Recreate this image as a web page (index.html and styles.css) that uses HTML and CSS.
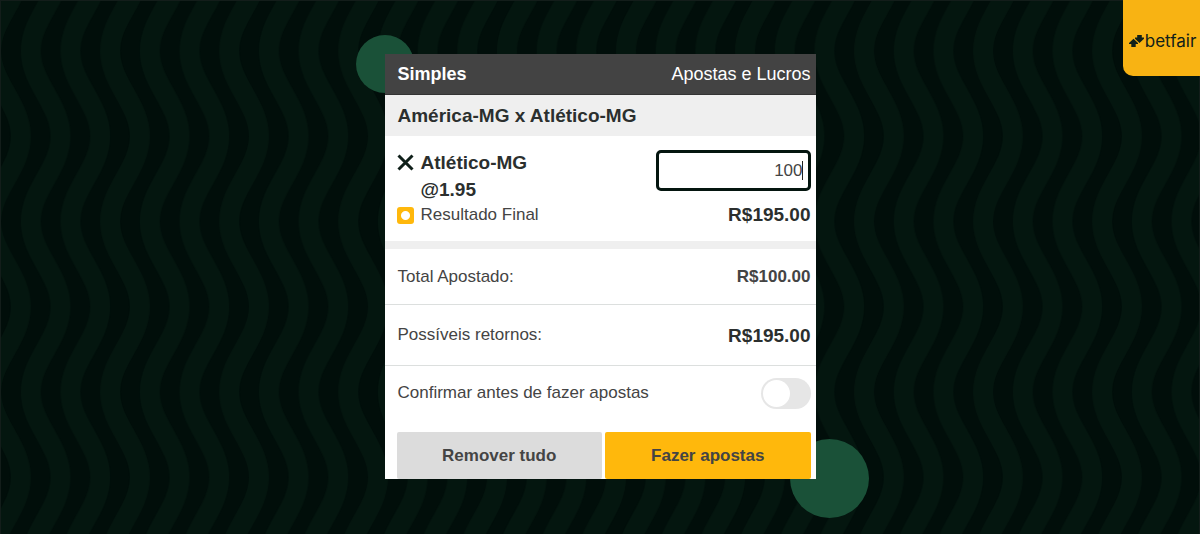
FILE: index.html
```html
<!DOCTYPE html>
<html lang="pt-BR">
<head>
  <meta charset="UTF-8" />
  <meta name="viewport" content="width=device-width, initial-scale=1.0" />
  <title>Betfair - Apostas</title>
  <link rel="stylesheet" href="styles.css">
</head>
<body>
  <svg class="waves" aria-hidden="true">
    <defs>
      <pattern id="wave" width="40" height="170" patternUnits="userSpaceOnUse" patternTransform="translate(0 50) scale(.992 1.003)">
        <g fill="none" stroke="#04160f" stroke-width="20">
          <path d="M-50 -10 V0 C-50 32 -20 53 -20 85 S-50 138 -50 170 V180" />
          <path d="M-10 -10 V0 C-10 32 20 53 20 85 S-10 138 -10 170 V180" />
          <path d="M30 -10 V0 C30 32 60 53 60 85 S30 138 30 170 V180" />
        </g>
      </pattern>
    </defs>
    <rect width="100%" height="100%" fill="url(#wave)" />
  </svg>

  <a class="brand" href="#" aria-label="betfair">
    <svg width="15" height="12" viewBox="0 0 15 12" aria-hidden="true">
      <path d="M4.5 3.8 L9 8 V9 H6.7 V12 H2.3 V9 H0 V8 Z" />
      <path d="M8.2 0 H12.8 V2.6 H15 V3.7 L10.5 8 L6 3.7 V2.6 H8.2 Z" />
    </svg>
    <span>betfair</span>
  </a>

  <main class="stage">
    <div class="circle circle-top"></div>
    <div class="circle circle-bottom"></div>

    <form class="betslip">
      <header class="slip-header">
        <strong>Simples</strong>
        <span>Apostas e Lucros</span>
      </header>
      <h2 class="event">América-MG x Atlético-MG</h2>

      <section class="selection">
        <button class="remove" type="button" aria-label="Remover">
          <svg width="17" height="17" viewBox="0 0 17 17"><path d="M1.5 1.5 L15.5 15.5 M15.5 1.5 L1.5 15.5" /></svg>
        </button>
        <label class="pick" for="stake">Atlético-MG<br>@1.95</label>
        <div class="stake">
          <input id="stake" type="text" value="100">
          <span class="caret"></span>
        </div>
        <span class="market-icon"></span>
        <span class="market">Resultado Final</span>
        <strong class="amount">R$195.00</strong>
      </section>

      <div class="row row-total">
        <span>Total Apostado:</span>
        <strong>R$100.00</strong>
      </div>
      <div class="row row-returns">
        <span>Possíveis retornos:</span>
        <strong class="amount">R$195.00</strong>
      </div>
      <div class="row row-confirm">
        <label for="confirm">Confirmar antes de fazer apostas</label>
        <input class="toggle" id="confirm" type="checkbox">
      </div>

      <div class="actions">
        <button class="btn" type="button">Remover tudo</button>
        <button class="btn btn-primary" type="button">Fazer apostas</button>
      </div>
    </form>
  </main>
</body>
</html>
```
FILE: styles.css
```css
* { box-sizing: border-box; }
body {
  margin: 0;
  min-height: 100vh;
  padding: 54px 0 55px;
  background: #010e0a;
  font-family: "Liberation Sans", Arial, sans-serif;
  font-size: 17px;
  line-height: 20px;
  color: #444;
}
.waves {
  position: fixed;
  top: 0;
  left: 0;
  width: 100%;
  height: 100%;
  border: 1px solid #131d1a;
  border-bottom: none;
}
.brand {
  position: absolute;
  top: 0;
  right: 0;
  z-index: 2;
  display: flex;
  align-items: center;
  justify-content: center;
  gap: 1px;
  width: 77px;
  height: 76px;
  padding: 6px 0 0 2px;
  background: #f8b313;
  border-bottom-left-radius: 10px;
  font-family: Inter, sans-serif;
  font-size: 17px;
  color: #10201a;
  text-decoration: none;
}
.brand svg {
  flex: none;
  fill: #10201a;
}
.stage {
  position: relative;
  width: 100%;
  max-width: 431px;
  margin: 0 auto;
}
.circle {
  position: absolute;
  border-radius: 50%;
  background: #1a5138;
}
.circle-top {
  top: -19px;
  left: -29px;
  width: 58px;
  height: 58px;
}
.circle-bottom {
  right: -53px;
  bottom: -39px;
  width: 79px;
  height: 79px;
}
.betslip {
  position: relative;
  background: #fff;
}
.slip-header {
  display: flex;
  align-items: center;
  justify-content: space-between;
  height: 41px;
  padding: 0 5px 0 13px;
  background: #434343;
  border-bottom: 1px solid #333;
  font-size: 18px;
  color: #fff;
}
.event {
  margin: 0;
  padding: 11px 13px 10px;
  background: #efefef;
  font-size: 19px;
  line-height: 20px;
  color: #2b2f2e;
}
.selection {
  display: grid;
  grid-template-columns: 17px 1fr auto;
  column-gap: 7px;
  padding: 13px 5px 14px 12px;
  border-bottom: 8px solid #efefef;
}
.remove {
  align-self: start;
  height: 17px;
  margin-top: 5px;
  padding: 0;
  border: none;
  background: none;
}
.remove svg {
  display: block;
  stroke: #10201a;
  stroke-width: 3;
}
.pick {
  font-size: 19px;
  font-weight: bold;
  line-height: 27px;
  color: #2b2f2e;
}
.stake {
  position: relative;
  width: 155px;
  margin-top: 1px;
}
.stake input {
  display: block;
  width: 100%;
  height: 41px;
  padding: 0 5px;
  border: 3px solid #04150f;
  border-radius: 5px;
  outline: none;
  background: #fff;
  font: inherit;
  color: #444;
  text-align: right;
}
.caret {
  position: absolute;
  top: 11px;
  right: 8px;
  width: 1px;
  height: 19px;
  background: #222;
}
.market-icon {
  align-self: center;
  width: 17px;
  height: 17px;
  border-radius: 3px;
  background: radial-gradient(circle, #fff 4px, #ffb80c 5px);
}
.market {
  line-height: 24px;
}
.amount {
  font-size: 19px;
  line-height: 23px;
  text-align: right;
  color: #2b2f2e;
}
.row {
  display: flex;
  align-items: center;
  justify-content: space-between;
  padding: 0 5px 0 13px;
}
.row-total {
  height: 56px;
  border-bottom: 1px solid #dcdfde;
}
.row-returns {
  height: 61px;
  border-bottom: 1px solid #dcdfde;
}
.row-confirm {
  height: 54px;
}
.toggle {
  appearance: none;
  width: 50px;
  height: 31px;
  margin: 0;
  border-radius: 16px;
  background: #e6e6e6;
}
.toggle::before {
  content: "";
  display: block;
  width: 27px;
  height: 27px;
  margin: 2px;
  border-radius: 50%;
  background: #fff;
}
.actions {
  display: grid;
  grid-template-columns: 1fr 1fr;
  gap: 3px;
  padding: 12px 5px 0 12px;
}
.btn {
  height: 47px;
  border: none;
  border-radius: 2px;
  background: #dcdcdc;
  font: inherit;
  font-weight: bold;
  color: #444;
}
.btn-primary {
  background: #ffb80c;
}
```
